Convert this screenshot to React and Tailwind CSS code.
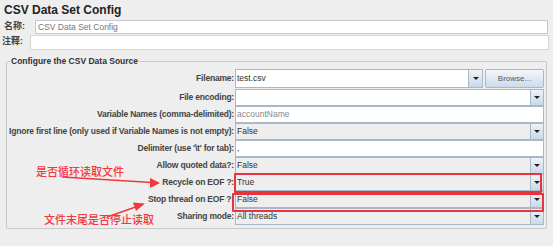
import React from 'react';

const rows = [
  { label: 'Filename:', value: 'test.csv', kind: 'file' },
  { label: 'File encoding:', value: '', kind: 'edit' },
  { label: 'Variable Names (comma-delimited):', value: 'accountName', kind: 'text', muted: true },
  { label: 'Ignore first line (only used if Variable Names is not empty):', value: 'False', kind: 'combo' },
  { label: "Delimiter (use '\\t' for tab):", value: ',', kind: 'text' },
  { label: 'Allow quoted data?:', value: 'False', kind: 'combo' },
  { label: 'Recycle on EOF ?:', value: 'True', kind: 'combo' },
  { label: 'Stop thread on EOF ?:', value: 'False', kind: 'combo' },
  { label: 'Sharing mode:', value: 'All threads', kind: 'combo' },
];

function Arrow({ w = 'w-[13px]' }) {
  return (
    <div className={`${w} h-full flex items-center justify-center border-l border-[#a9b7c6] bg-gradient-to-b from-[#eef3f8] to-[#c9d9e9]`}>
      <div className="w-0 h-0 border-l-[3px] border-r-[3px] border-t-[3px] border-l-transparent border-r-transparent border-t-[#222]" />
    </div>
  );
}

function Field({ row }) {
  if (row.kind === 'file') {
    return (
      <div className="flex h-full gap-[2px]">
        <div className="flex flex-1 h-full border border-[#a9b7c6] bg-white">
          <span className="flex-1 pl-[1px] leading-[17px] text-[#333]">{row.value}</span>
          <Arrow w="w-[14px]" />
        </div>
        <div className="w-[59px] h-full border border-[#a9b7c6] rounded-[2px] bg-gradient-to-b from-[#f2f6fa] to-[#cddced] flex items-center justify-center text-[#555] text-[8px]">
          Browse...
        </div>
      </div>
    );
  }
  const bg = row.kind === 'combo' ? 'bg-[#eeeeee]' : 'bg-white';
  return (
    <div className={`flex h-full border border-[#a9b7c6] ${bg}`}>
      <span className={`flex-1 pl-[1px] leading-[15px] ${row.muted ? 'text-[#888]' : 'text-[#333]'}`}>{row.value}</span>
      {(row.kind === 'combo' || row.kind === 'edit') && <Arrow />}
    </div>
  );
}

export default function App() {
  return (
    <div
      className="relative w-[553px] h-[246px] bg-[#eeeeee] overflow-hidden text-[#333]"
      style={{ fontFamily: '"Liberation Sans", "Noto Sans CJK SC", sans-serif' }}
    >
      <div className="pl-[4px] pt-[2px] h-[19px] text-[12px] font-bold text-[#222] leading-[16px]">CSV Data Set Config</div>

      <div className="flex items-center h-[15px] pr-[5px]">
        <span className="w-[35px] pl-[4px] text-[9px] font-bold text-[#444]">名称:</span>
        <div className="flex-1 h-[14px] border border-[#c4c8cc] bg-white pl-[2px] text-[8.5px] leading-[12px] text-[#777]">CSV Data Set Config</div>
      </div>
      <div className="flex items-center h-[16px] pr-[4px]">
        <span className="w-[30px] pl-[2px] text-[9px] font-bold text-[#444]">注释:</span>
        <div className="flex-1 h-[15px] border border-[#d4d6d8] bg-white" />
      </div>

      <fieldset className="mx-[6px] mt-[7px] h-[172px] border border-[#c9c9c9] rounded-[2px] pr-[2px] pt-[3px]">
        <legend className="ml-[3px] px-[1px] text-[8.5px] font-bold text-[#333] leading-[9px]">Configure the CSV Data Source</legend>
        <div className="flex flex-col text-[8.5px]">
          {rows.map((row, i) => (
            <div key={row.label} className={`flex ${i === 0 ? 'h-[19px] mb-[1px]' : 'h-[17px]'}`}>
              <span className="w-[228px] pr-[1px] flex items-center justify-end whitespace-nowrap font-bold text-[#444] tracking-[-0.2px]">
                {row.label}
              </span>
              <div className="flex-1">
                <Field row={row} />
              </div>
            </div>
          ))}
        </div>
      </fieldset>

      {/* red annotations */}
      <div className="absolute left-[234px] top-[173px] w-[308px] h-[20px] border-2 border-[#e8343a] rounded-[1px]" />
      <div className="absolute left-[232px] top-[193px] w-[312px] h-[19px] border-2 border-[#e8343a] rounded-[1px]" />
      <div
        className="absolute left-[36px] top-[164px] text-[11px] font-medium text-[#f2383e] leading-[14px]"
        style={{ fontFamily: '"Noto Sans CJK SC", sans-serif' }}
      >
        是否循环读取文件
      </div>
      <div
        className="absolute left-[44px] top-[212px] text-[11px] font-medium text-[#f2383e] leading-[14px]"
        style={{ fontFamily: '"Noto Sans CJK SC", sans-serif' }}
      >
        文件末尾是否停止读取
      </div>
      <svg className="absolute left-0 top-0" width="553" height="246">
        <line x1="62" y1="177" x2="152" y2="182.5" stroke="#f2383e" strokeWidth="1.5" />
        <polygon points="160,183 150,178 150,188" fill="#f2383e" />
        <line x1="107" y1="217" x2="137" y2="206.5" stroke="#f2383e" strokeWidth="1.5" />
        <polygon points="145,203.5 133,202.5 136,211" fill="#f2383e" />
      </svg>
    </div>
  );
}
